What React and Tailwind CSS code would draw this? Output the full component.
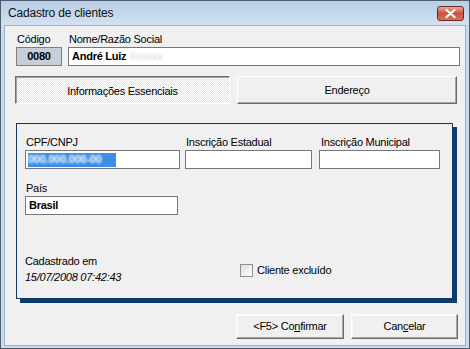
import React from 'react';

const font = { fontFamily: '"Liberation Sans", Arial, sans-serif' };

function Field({ label, w, children, labelPad = 'pl-[1px]', className = '' }) {
  return (
    <div className={`flex flex-col ${className}`} style={{ width: w }}>
      <div className={`h-[15px] leading-[15px] ${labelPad}`}>{label}</div>
      <div className="h-[19px] border border-[#767676] bg-white flex items-center px-[3px] overflow-hidden whitespace-nowrap">
        {children}
      </div>
    </div>
  );
}

function Btn({ children, w }) {
  return (
    <button
      className="h-[25px] border border-t-[#ffffff] border-l-[#ffffff] border-b-[#6b6b6b] border-r-[#6b6b6b] bg-[#f0f0f0] shadow-[inset_-1px_-1px_0_#a8a8a8,inset_1px_1px_0_#f8f8f8] text-[11px] tracking-[-0.25px] text-black"
      style={{ width: w }}
    >
      {children}
    </button>
  );
}

export default function App() {
  return (
    <div className="w-[470px] h-[349px] border border-[#4f5d6b] bg-[#c9dbee] flex flex-col text-[11px] tracking-[-0.25px] text-black" style={font}>
      {/* title bar */}
      <div className="h-[24px] shrink-0 bg-gradient-to-b from-[#b6cde6] to-[#d3e2f1] flex items-center justify-between pl-[7px] pr-[5px]">
        <span className="text-[12px] tracking-[-0.2px] text-[#111]">Cadastro de clientes</span>
        <div className="w-[27px] h-[15px] rounded-[3px] border border-[#6b2a23] bg-gradient-to-b from-[#e8a595] via-[#c8503c] to-[#d8735e] flex items-center justify-center">
          <svg width="11" height="9" viewBox="0 0 11 9">
            <path d="M1.5 1 L9.5 8 M9.5 1 L1.5 8" stroke="#ffffff" strokeWidth="2.2" strokeLinecap="round" />
          </svg>
        </div>
      </div>

      {/* client area */}
      <div className="flex-1 mx-[3px] mb-[2px] border border-[#9fb0c2] bg-[#f0f0f0] flex flex-col">
        {/* codigo / nome */}
        <div className="flex gap-[6px] pl-[11px] pt-[6px]">
          <div className="flex flex-col w-[46px]">
            <div className="h-[15px] leading-[15px] pl-[1px]">Código</div>
            <div className="h-[19px] border border-[#7e7e7e] bg-[#c6ced7] flex items-center justify-center font-bold">0080</div>
          </div>
          <div className="flex flex-col w-[392px]">
            <div className="h-[15px] leading-[15px] pl-[1px]">Nome/Razão Social</div>
            <div className="h-[19px] border border-[#767676] bg-white flex items-center px-[3px] font-bold whitespace-nowrap">
              André Luiz <span className="ml-[3px] font-normal text-[#d6d6d6] blur-[1px]">Xxxxxx</span>
            </div>
          </div>
        </div>

        {/* tabs */}
        <div className="flex gap-[7px] pl-[10px] mt-[10px]">
          <div className="w-[215px] h-[28px] border border-t-[#6e6e6e] border-l-[#6e6e6e] border-b-[#ffffff] border-r-[#ffffff] shadow-[inset_1px_1px_0_#a0a0a0] bg-[image:repeating-conic-gradient(#ffffff_0_25%,#e4e4e4_0_50%)] bg-size-[2px_2px] flex items-center justify-center pt-[2px]">
            Informações Essenciais
          </div>
          <div className="w-[220px] h-[28px] border border-t-[#ffffff] border-l-[#ffffff] border-b-[#6b6b6b] border-r-[#6b6b6b] shadow-[inset_-1px_-1px_0_#a8a8a8] bg-[#f0f0f0] flex items-center justify-center">
            Endereço
          </div>
        </div>

        {/* panel */}
        <div className="ml-[11px] mt-[19px] w-[437px] h-[176px] border border-[#0f3a63] shadow-[4px_4px_0_#0d3d6b] bg-[#f0f0f0] flex flex-col pl-[8px] pt-[11px]">
          <div className="flex">
            <Field label="CPF/CNPJ" w={155}>
              <span className="bg-[#3b8de6] h-[14px] w-[88px] -ml-[1px] flex items-center overflow-hidden">
                <span className="text-white blur-[0.8px] font-bold">000.000.000-00</span>
              </span>
            </Field>
            <Field label="Inscrição Estadual" w={127} className="ml-[5px]" />
            <Field label="Inscrição Municipal" w={121} className="ml-[7px]" labelPad="pl-[2px]" />
          </div>

          <div className="flex mt-[12px]">
            <Field label="País" w={153}>
              <span className="font-bold">Brasil</span>
            </Field>
          </div>

          <div className="flex items-center mt-[38px]">
            <div className="w-[215px] flex flex-col">
              <div className="h-[16px] leading-[16px]">Cadastrado em</div>
              <div className="h-[16px] leading-[16px] italic">15/07/2008 07:42:43</div>
            </div>
            <div className="flex items-center gap-[4px] mt-[2px]">
              <div className="w-[13px] h-[13px] border border-[#8e8f8f] bg-gradient-to-br from-[#dcdcdc] to-[#ffffff]" />
              <span>Cliente excluído</span>
            </div>
          </div>
        </div>

        {/* buttons */}
        <div className="flex justify-end gap-[7px] mt-[15px] pr-[7px]">
          <Btn w={108}>&lt;F5&gt; Co<u>n</u>firmar</Btn>
          <Btn w={107}>Can<u>c</u>elar</Btn>
        </div>
      </div>
    </div>
  );
}
